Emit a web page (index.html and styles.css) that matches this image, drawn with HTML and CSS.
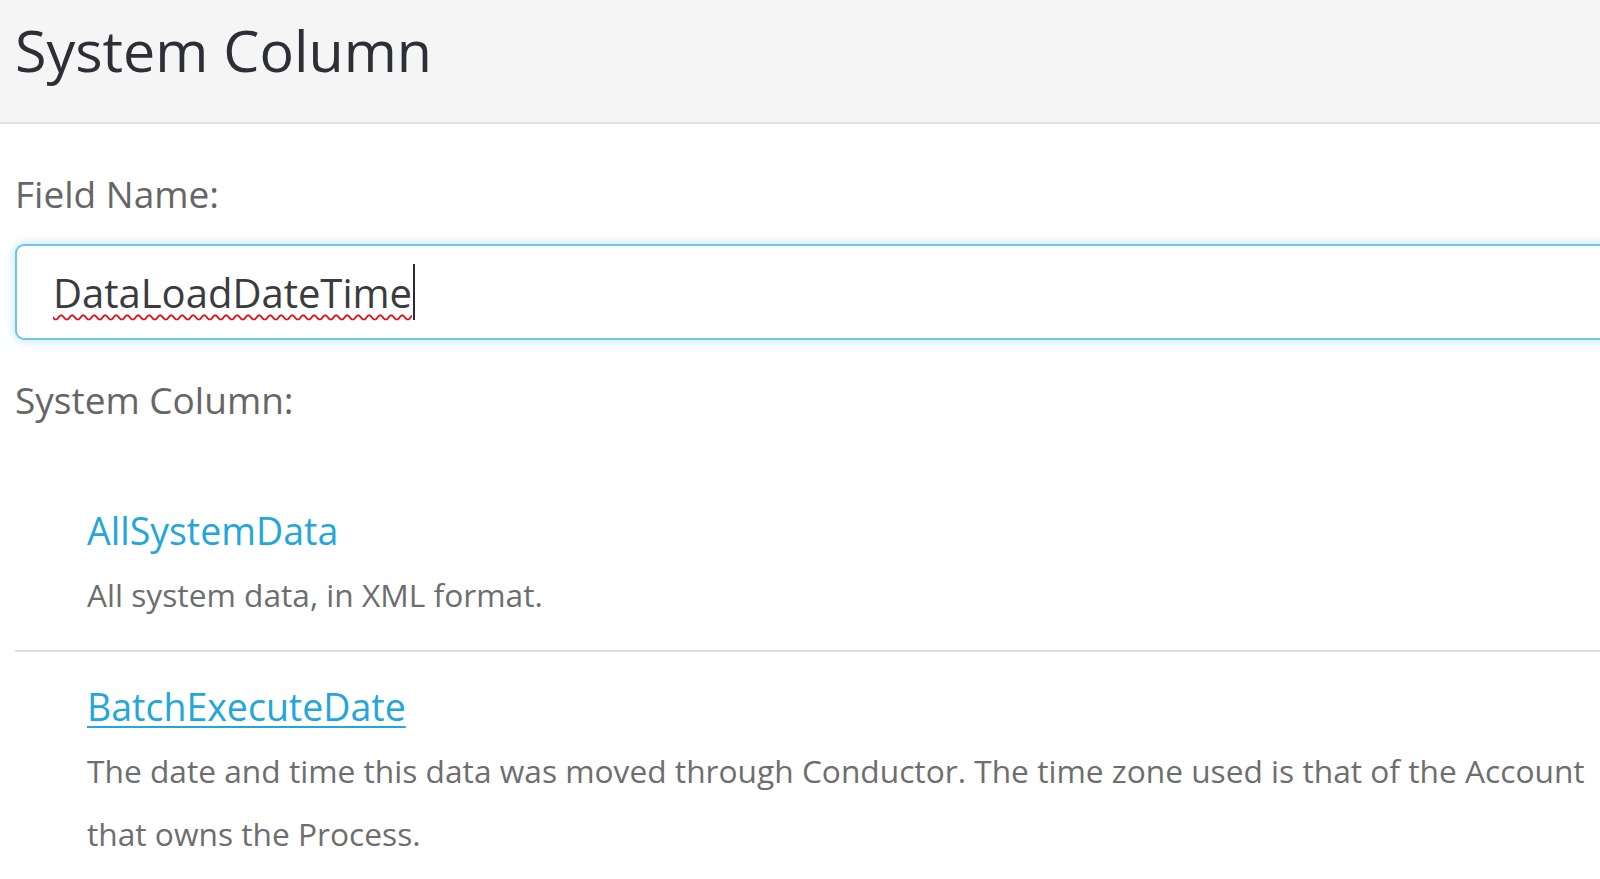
FILE: index.html
```html
<!DOCTYPE html>
<html lang="en">
<head>
<meta charset="utf-8">
<title>System Column</title>
<link rel="stylesheet" href="styles.css">
</head>
<body>
<header class="header">
  <h1 class="title">System Column</h1>
</header>
<main class="content">
  <div class="field-label">Field Name:</div>
  <div class="input">
    <span class="input-text">DataLoadDateTime</span><span class="caret"></span>
  </div>
  <div class="field-label field-label--second">System Column:</div>
  <ul class="columns">
    <li class="column">
      <a class="column-name" href="#">AllSystemData</a>
      <p class="column-desc">All system data, in XML format.</p>
    </li>
    <li class="column">
      <a class="column-name column-name--hover" href="#">BatchExecuteDate</a>
      <p class="column-desc">The date and time this data was moved through Conductor. The time zone used is that of the Account that owns the Process.</p>
    </li>
  </ul>
</main>
</body>
</html>
```

FILE: styles.css
```css
html, body {
  margin: 0;
  padding: 0;
  background: #ffffff;
  overflow: hidden;
}
body {
  width: 1600px;
  height: 879px;
  font-family: "Open Sans", "Liberation Sans", sans-serif;
}
.header {
  height: 124px;
  box-sizing: border-box;
  background: #f5f5f5;
  border-bottom: 2px solid #e2e2e2;
  padding-left: 15px;
  display: flex;
  align-items: center;
}
.title {
  margin: 0;
  font-weight: 400;
  font-size: 57.4px;
  line-height: 1;
  color: #2c2f36;
  padding-bottom: 20px;
}
.content {
  padding-left: 15px;
}
.field-label {
  margin-top: 45px;
  font-size: 37px;
  line-height: 50px;
  color: #666666;
}
.field-label--second {
  margin-top: 35px;
}
.input {
  margin-top: 25px;
  width: 1640px;
  height: 96px;
  box-sizing: border-box;
  border: 2px solid #6cc6e4;
  border-radius: 9px;
  box-shadow: 0 0 10px rgba(102, 194, 228, 0.5);
  display: flex;
  align-items: center;
  padding-left: 36px;
}
.input-text {
  font-size: 40px;
  color: #3a3b40;
  text-decoration: underline wavy #e0141e;
  text-decoration-thickness: 2px;
  text-underline-offset: 6px;
}
.caret {
  width: 2px;
  height: 56px;
  background: #2a2b30;
  margin-left: 1px;
}
.columns {
  list-style: none;
  margin: 53px 0 0 0;
  padding: 0;
}
.column {
  padding: 28px 0 24px 72px;
}
.column + .column {
  border-top: 2px solid #dedede;
  padding-top: 30px;
}
.column-name {
  display: block;
  font-size: 37.5px;
  line-height: 50px;
  color: #23a6d9;
  text-decoration: none;
}
.column-name--hover {
  text-decoration: underline;
  text-decoration-thickness: 2px;
  text-underline-offset: 5px;
}
.column-desc {
  margin: 7px 0 0 0;
  font-size: 31.7px;
  line-height: 63px;
  color: #6e6e6e;
}
```
